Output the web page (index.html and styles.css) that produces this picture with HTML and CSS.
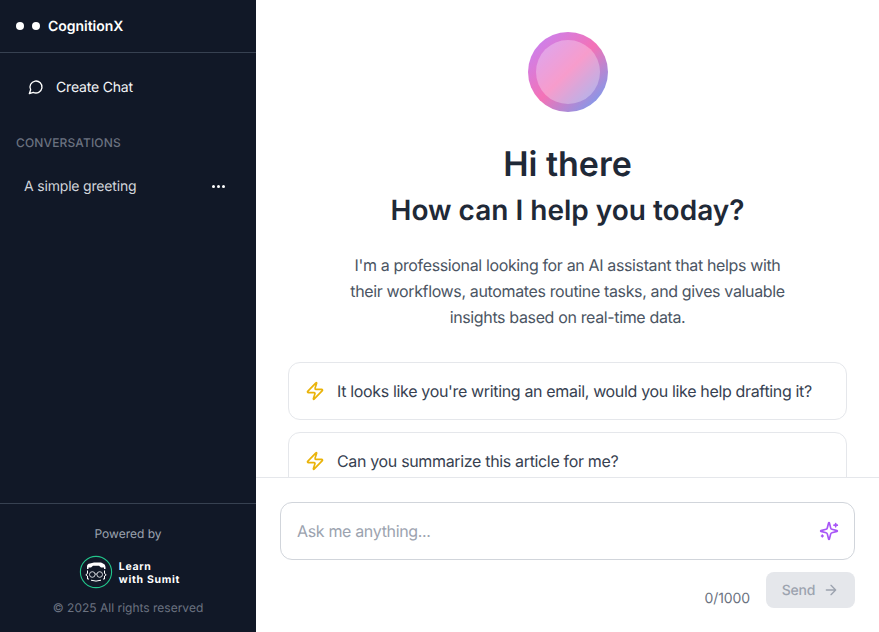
FILE: index.html
```html
<!DOCTYPE html>
<html lang="en">
<head>
<meta charset="utf-8">
<title>CognitionX</title>
<link rel="stylesheet" href="styles.css">
</head>
<body>
<div class="app">
  <aside class="sidebar">
    <header class="brand">
      <span class="dot"></span><span class="dot"></span>
      <span class="brand-name">CognitionX</span>
    </header>
    <div class="create">
      <svg class="icon-chat" viewBox="0 0 24 24"><path d="M7.9 20A9 9 0 1 0 4 16.1L2 22Z"/></svg>
      <span>Create Chat</span>
    </div>
    <div class="section-label">CONVERSATIONS</div>
    <div class="conv">
      <span>A simple greeting</span>
      <span class="more"><i></i><i></i><i></i></span>
    </div>
    <footer class="side-foot">
      <div class="powered">Powered by</div>
      <div class="lws">
        <svg class="lws-mark" viewBox="0 0 34 34">
          <circle class="lws-ring" cx="17" cy="17" r="15.6"/>
          <path class="lws-hair" d="M8 14V11.5Q8 9 11 8.6L13 8L15 7.6L22 7.4L24 8.6Q26.5 9.5 26.5 12V14L25 14V12.4H22L20 10.8H14L12 12.4H9.5V14Z"/>
          <path class="lws-line" d="M8.5 15.5V18.5L6.8 19.8L8.5 21V24H10M25.5 15.5V18.5L27.2 19.8L25.5 21V24H24M12 25.2Q17 27 22 25.2"/>
          <circle class="lws-glass" cx="13.3" cy="19.5" r="2.8"/>
          <circle class="lws-glass" cx="20.7" cy="19.5" r="2.8"/>
          <path class="lws-glass" d="M16.1 19H17.9"/>
        </svg>
        <div class="lws-name">Learn<br>with Sumit</div>
      </div>
      <div class="copy">© 2025 All rights reserved</div>
    </footer>
  </aside>
  <main class="main">
    <section class="scroll">
      <div class="avatar"><div class="avatar-inner"></div></div>
      <h1 class="hi">Hi there</h1>
      <h2 class="help">How can I help you today?</h2>
      <p class="intro">I'm a professional looking for an AI assistant that helps with their workflows, automates routine tasks, and gives valuable insights based on real-time data.</p>
      <div class="cards">
        <div class="card">
          <svg class="icon-zap" viewBox="0 0 24 24"><path d="M4 14a1 1 0 0 1-.78-1.63l9.9-10.2a.5.5 0 0 1 .86.46l-1.92 6.02A1 1 0 0 0 13 10h7a1 1 0 0 1 .78 1.63l-9.9 10.2a.5.5 0 0 1-.86-.46l1.92-6.02A1 1 0 0 0 11 14z"/></svg>
          <span>It looks like you're writing an email, would you like help drafting it?</span>
        </div>
        <div class="card">
          <svg class="icon-zap" viewBox="0 0 24 24"><path d="M4 14a1 1 0 0 1-.78-1.63l9.9-10.2a.5.5 0 0 1 .86.46l-1.92 6.02A1 1 0 0 0 13 10h7a1 1 0 0 1 .78 1.63l-9.9 10.2a.5.5 0 0 1-.86-.46l1.92-6.02A1 1 0 0 0 11 14z"/></svg>
          <span>Can you summarize this article for me?</span>
        </div>
      </div>
    </section>
    <section class="composer">
      <div class="input">
        <span class="placeholder">Ask me anything...</span>
        <svg class="icon-spark" viewBox="0 0 24 24"><path d="M9.937 15.5A2 2 0 0 0 8.5 14.063l-6.135-1.582a.5.5 0 0 1 0-.962L8.5 9.936A2 2 0 0 0 9.937 8.5l1.582-6.135a.5.5 0 0 1 .963 0L14.063 8.5A2 2 0 0 0 15.5 9.937l6.135 1.581a.5.5 0 0 1 0 .964L15.5 14.063a2 2 0 0 0-1.437 1.437l-1.582 6.135a.5.5 0 0 1-.963 0z"/><path d="M20 3v4M22 5h-4M4 17v2M5 18H3"/></svg>
      </div>
      <div class="actions">
        <span class="count">0/1000</span>
        <div class="send">
          <span>Send</span>
          <svg class="icon-arrow" viewBox="0 0 24 24"><path d="M5 12h14M12 5l7 7-7 7"/></svg>
        </div>
      </div>
    </section>
  </main>
</div>
</body>
</html>
```
FILE: styles.css
```css
* { box-sizing: border-box; margin: 0; padding: 0; }
html, body { height: 100%; overflow: hidden; }
body { font-family: Inter, "Liberation Sans", sans-serif; background: #fff; text-rendering: geometricPrecision; -webkit-font-smoothing: antialiased; }
.app { display: flex; height: 632px; }

.sidebar { width: 256px; flex: none; display: flex; flex-direction: column; background: #111827; color: #fff; }
.brand { height: 53px; display: flex; align-items: center; gap: 8px; padding-left: 16px; border-bottom: 1px solid #374151; }
.dot { width: 8px; height: 8px; border-radius: 50%; background: #fff; }
.brand-name { font-size: 14px; font-weight: 600; letter-spacing: -.03px; }
.create { display: flex; align-items: center; gap: 12px; height: 36px; margin: 16px 0 0 28px; font-size: 14px; letter-spacing: -.18px; color: #f3f4f6; }
.icon-chat { width: 16px; height: 16px; fill: none; stroke: #fff; stroke-width: 2; stroke-linecap: round; stroke-linejoin: round; }
.section-label { margin: 30px 0 0 16px; font-size: 12px; line-height: 16px; font-weight: 500; letter-spacing: .15px; color: #6b7280; }
.conv { display: flex; align-items: center; justify-content: space-between; height: 36px; margin-top: 17px; padding: 0 29px 0 24px; font-size: 14px; letter-spacing: -.18px; color: #d1d5db; }
.more { display: flex; gap: 2px; margin-right: 2px; }
.more i { width: 3px; height: 3px; border-radius: 50%; background: #fff; }
.side-foot { margin-top: auto; height: 129px; border-top: 1px solid #374151; padding-top: 22px; display: flex; flex-direction: column; align-items: center; }
.powered { font-size: 12px; line-height: 16px; color: #9ca3af; }
.lws { display: flex; align-items: center; gap: 6px; height: 34px; margin: 13px 0 0 3px; }
.lws-mark { width: 34px; height: 34px; }
.lws-ring { fill: none; stroke: #22c58b; stroke-width: 1.1; }
.lws-hair { fill: #fff; }
.lws-line { fill: none; stroke: #fff; stroke-width: 1; }
.lws-glass { fill: none; stroke: #e5e7eb; stroke-width: .9; }
.lws-name { padding-top: 3px; font-size: 10.5px; line-height: 12.7px; font-weight: 700; color: #fff; letter-spacing: .7px; }
.copy { margin-top: 11px; font-size: 12px; line-height: 16px; color: #6b7280; }

.main { flex: 1; min-width: 0; display: flex; flex-direction: column; }
.scroll { height: 477px; overflow: hidden; padding: 32px 32px 0; display: flex; flex-direction: column; align-items: center; }
.avatar { width: 80px; height: 80px; flex: none; border-radius: 50%; padding: 8px; background: linear-gradient(135deg, #c084fc 0%, #f472b6 50%, #60a5fa 100%); }
.avatar-inner { width: 64px; height: 64px; border-radius: 50%; background: rgba(255, 255, 255, .3); }
.hi { margin-top: 33px; font-size: 34px; line-height: 40px; font-weight: 600; color: #1f2937; }
.help { margin-top: 7px; font-size: 28px; line-height: 36px; font-weight: 600; color: #1f2937; }
.intro { margin-top: 24px; width: 448px; font-size: 16px; line-height: 26px; letter-spacing: -.36px; text-align: center; color: #4b5563; }
.cards { width: 100%; margin-top: 32px; display: flex; flex-direction: column; gap: 12px; }
.card { display: flex; flex: none; align-items: center; gap: 12px; height: 58px; padding: 0 16px; border: 1px solid #e5e7eb; border-radius: 12px; font-size: 16px; letter-spacing: -.34px; color: #374151; }
.icon-zap { width: 20px; height: 20px; flex: none; fill: none; stroke: #eab308; stroke-width: 2; stroke-linecap: round; stroke-linejoin: round; }

.composer { flex: 1; border-top: 1px solid #e5e7eb; padding: 24px 24px 0; }
.input { height: 58px; display: flex; align-items: center; justify-content: space-between; padding: 0 15px 0 16px; border: 1px solid #d1d5db; border-radius: 12px; }
.placeholder { font-size: 16px; letter-spacing: -.34px; color: #9ca3af; }
.icon-spark { width: 20px; height: 20px; fill: none; stroke: #a855f7; stroke-width: 2; stroke-linecap: round; stroke-linejoin: round; }
.actions { display: flex; justify-content: flex-end; align-items: flex-end; gap: 16px; margin-top: 12px; }
.count { font-size: 14px; line-height: 20px; letter-spacing: -.1px; color: #6b7280; margin-bottom: -1px; }
.send { width: 89px; height: 36px; display: flex; align-items: center; justify-content: center; gap: 8px; border-radius: 8px; background: #e5e7eb; color: #9ca3af; font-size: 14px; font-weight: 500; letter-spacing: -.15px; }
.icon-arrow { width: 16px; height: 16px; fill: none; stroke: #9ca3af; stroke-width: 2; stroke-linecap: round; stroke-linejoin: round; }
```
